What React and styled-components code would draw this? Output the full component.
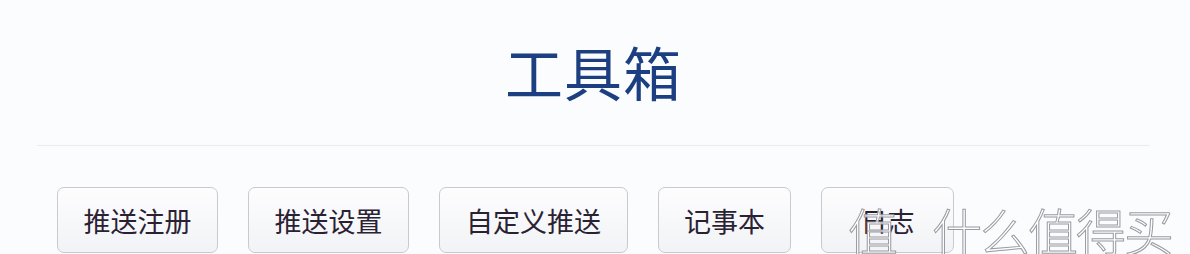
import React from "react";
import styled, { createGlobalStyle } from "styled-components";

const Global = createGlobalStyle`
  html, body { margin: 0; padding: 0; background: #fbfcfe; }
  body { font-family: "Noto Sans CJK SC", "Noto Sans", sans-serif; overflow: hidden; }
`;

const Page = styled.div`
  position: relative;
  width: 1190px;
  height: 254px;
  overflow: hidden;
  background: #fbfcfe;
  box-sizing: border-box;
  padding: 0 40px 0 37px;
`;

const Header = styled.div`
  height: 145px;
  display: flex;
  align-items: center;
  justify-content: center;
`;

const Title = styled.h1`
  margin: 0;
  font-size: 58px;
  font-weight: 400;
  line-height: 1;
  color: #1b3f80;
  letter-spacing: 1px;
  transform: translateY(-2px);
`;

const Divider = styled.div`
  height: 1px;
  background: #eaecf0;
`;

const ButtonRow = styled.div`
  display: flex;
  gap: 30px;
  padding: 41px 0 0 20px;
`;

const ToolButton = styled.button`
  height: 66px;
  padding: 0;
  border: 1px solid #c9cacf;
  border-radius: 7px;
  background: linear-gradient(#fdfdfe, #f2f3f6);
  font-family: "Noto Sans CJK SC", "Noto Sans", sans-serif;
  font-size: 27px;
  font-weight: 400;
  color: #2a2233;
  display: flex;
  align-items: center;
  justify-content: center;
  box-sizing: border-box;
  cursor: pointer;
`;

const Watermark = styled.div`
  position: absolute;
  left: 848px;
  top: 204px;
  font-family: "Noto Sans CJK SC", sans-serif;
  font-size: 50px;
  font-weight: 300;
  line-height: 1;
  white-space: nowrap;
  color: rgba(255, 255, 255, 0.8);
  -webkit-text-stroke: 1px #9a9aa2;
  display: flex;
  gap: 34px;
`;

const WatermarkWord = styled.span`
  letter-spacing: ${(p) => p.$spacing || 0}px;
`;

const buttons = [
  { label: "推送注册", w: 161 },
  { label: "推送设置", w: 161 },
  { label: "自定义推送", w: 189 },
  { label: "记事本", w: 133 },
  { label: "日志", w: 133 },
];

export default function App() {
  return (
    <>
      <Global />
      <Page>
        <Header>
          <Title>工具箱</Title>
        </Header>
        <Divider />
        <ButtonRow>
          {buttons.map((b) => (
            <ToolButton key={b.label} style={{ width: b.w }}>
              {b.label}
            </ToolButton>
          ))}
        </ButtonRow>
        <Watermark>
          <WatermarkWord>值</WatermarkWord>
          <WatermarkWord $spacing={-2}>什么值得买</WatermarkWord>
        </Watermark>
      </Page>
    </>
  );
}
